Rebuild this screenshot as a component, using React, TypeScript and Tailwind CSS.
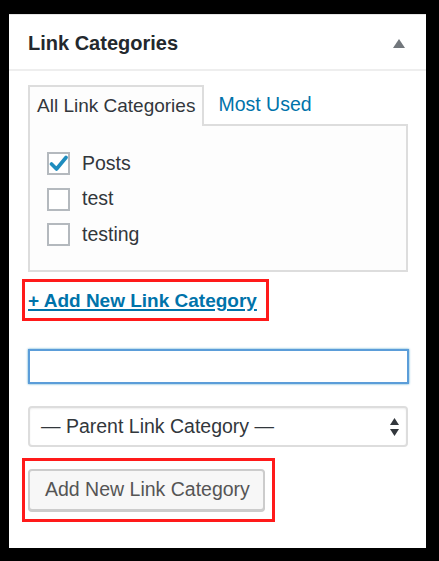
export default function App() {
  const cats = [
    { name: "Posts", checked: true },
    { name: "test", checked: false },
    { name: "testing", checked: false },
  ]

  return (
    <div className="w-[439px] h-[561px] bg-black pt-[14px] pl-[9px] font-['Liberation_Sans',Arial,sans-serif]">
      <div className="w-[417px] h-[534px] bg-white border-t border-[#e5e5e5]">
        {/* Header */}
        <div className="h-[56px] flex items-center justify-between pl-[19px] pr-[21px] border-b-2 border-[#eeeeee]">
          <h2 className="text-[20px] font-bold text-[#23282d] pt-[2px]">Link Categories</h2>
          <svg width="12" height="9" viewBox="0 0 12 9" className="mt-[2px]">
            <path d="M6 0 L12 9 L0 9 Z" fill="#72777c" />
          </svg>
        </div>

        <div className="pl-[19px] pr-[18px] pt-[14px]">
          {/* Tabs */}
          <div className="flex items-end">
            <div className="relative z-10 h-[41px] -mb-[2px] px-[7px] border-2 border-b-0 border-[#dddddd] bg-[#fdfdfd] flex items-center text-[19px] text-[#32373c]">
              All Link Categories
            </div>
            <div className="h-[39px] px-[14px] flex items-center text-[19.5px] text-[#0073aa]">Most Used</div>
          </div>

          {/* Checklist */}
          <div className="h-[148px] border-2 border-[#dddddd] bg-[#fdfdfd] pt-[26px] pl-[17px] flex flex-col gap-[12.5px]">
            {cats.map((c) => (
              <label key={c.name} className="flex items-center gap-[12px] h-[23px]">
                <span className="w-[23px] h-[23px] border-2 border-[#b4b9be] bg-white flex items-center justify-center">
                  {c.checked && (
                    <svg width="19" height="17" viewBox="0 0 19 17">
                      <path d="M2.5 9 L7.5 14 L17 2.5" stroke="#1e8cbe" strokeWidth="3.6" fill="none" strokeLinecap="round" strokeLinejoin="round" />
                    </svg>
                  )}
                </span>
                <span className="text-[19.5px] text-[#32373c]">{c.name}</span>
              </label>
            ))}
          </div>

          {/* Add link */}
          <div className="mt-[7px] -ml-[6px] inline-block border-[3px] border-[#ff1a1a] h-[42px] pl-[3px] pr-[9px] pt-[5px]">
            <a href="#" className="text-[19px] font-semibold text-[#0073aa] underline underline-offset-2 decoration-[1.5px]">
              + Add New Link Category
            </a>
          </div>

          {/* Input */}
          <input
            type="text"
            className="block mt-[28px] w-[381px] h-[35px] border-2 border-[#5b9dd9] bg-white shadow-[0_0_2px_rgba(30,140,190,0.8)] outline-none"
          />

          {/* Select */}
          <div className="mt-[22px] w-[380px] h-[41px] border-2 border-[#dddddd] rounded-[4px] bg-white flex items-center justify-between pl-[11px] pr-[7px] shadow-[inset_0_1px_2px_rgba(0,0,0,0.07)]">
            <span className="text-[19.5px] text-[#32373c]">— Parent Link Category —</span>
            <svg width="9" height="18" viewBox="0 0 9 18">
              <path d="M4.5 0 L9 7 L0 7 Z" fill="#32373c" />
              <path d="M4.5 18 L9 11 L0 11 Z" fill="#32373c" />
            </svg>
          </div>

          {/* Submit */}
          <div className="mt-[11px] -ml-[6px] inline-block border-[3px] border-[#ff1a1a] pl-[3px] pr-[7px] py-[8px]">
            <button className="h-[42px] w-[237px] border-2 border-[#cccccc] rounded-[4px] bg-[#f7f7f7] shadow-[0_1px_0_#cccccc] text-left pl-[15px] text-[19.5px] text-[#555555]">
              Add New Link Category
            </button>
          </div>
        </div>
      </div>
    </div>
  )
}
